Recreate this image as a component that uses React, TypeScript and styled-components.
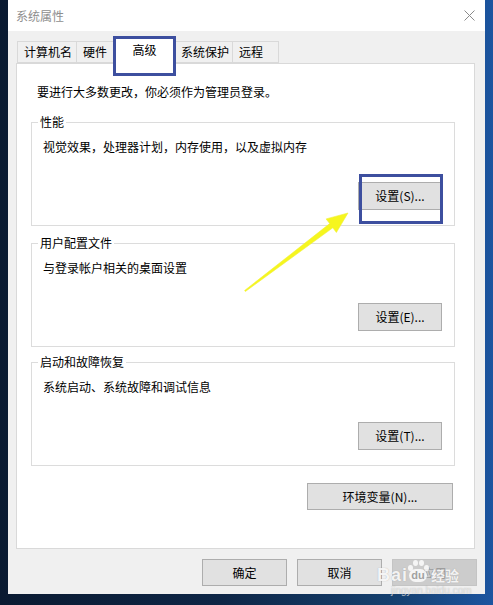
import React from "react";
import styled, { createGlobalStyle } from "styled-components";

const Global = createGlobalStyle`
  html, body { margin: 0; padding: 0; }
  body {
    width: 493px;
    height: 605px;
    overflow: hidden;
    background: linear-gradient(90deg, #0a1a31 0%, #0e2646 45%, #15406f 80%, #1c55a0 100%);
    font-family: "Noto Sans CJK SC", "Noto Sans", sans-serif;
    font-size: 12px;
    color: #000;
  }
`;

const Desktop = styled.div`
  position: relative;
  width: 493px;
  height: 605px;
  box-sizing: border-box;
  padding-left: 8px;
  display: flex;
  align-items: flex-start;
`;

const Window = styled.div`
  width: 477px;
  height: 594px;
  background: #f0f0f0;
  display: flex;
  flex-direction: column;
`;

const TitleBar = styled.div`
  height: 31px;
  flex: none;
  background: #fff;
  display: flex;
  align-items: center;
  justify-content: space-between;
  padding: 0 10px 0 8px;
`;

const Title = styled.span`
  color: #8e8e8e;
  font-size: 12px;
  line-height: 16px;
`;

const CloseGlyph = styled.svg`
  width: 11px;
  height: 11px;
  display: block;
`;

const Body = styled.div`
  flex: none;
  display: flex;
  flex-direction: column;
  padding: 0 10px 0 8px;
`;

const TabStrip = styled.div`
  display: flex;
  align-items: flex-end;
  height: 26px;
  margin-top: 6px;
  padding-left: 1px;
`;

const Tab = styled.div<{ $w: number; $active?: boolean }>`
  position: relative;
  box-sizing: border-box;
  width: ${(p) => p.$w}px;
  height: ${(p) => (p.$active ? 27 : 22)}px;
  margin-left: -1px;
  margin-bottom: ${(p) => (p.$active ? -1 : 0)}px;
  border: 1px solid #d9d9d9;
  border-bottom: ${(p) => (p.$active ? "none" : "1px solid #d9d9d9")};
  background: ${(p) => (p.$active ? "#fff" : "#f0f0f0")};
  z-index: ${(p) => (p.$active ? 2 : 1)};
  display: flex;
  align-items: center;
  justify-content: ${(p) => (p.$active ? "center" : "flex-start")};
  padding: ${(p) => (p.$active ? "0 0 3px 0" : "0 0 0 6px")};
  line-height: 16px;
  white-space: nowrap;
  &:first-child { margin-left: 0; }
`;

const Highlight = styled.div<{ $l: number; $t: number; $w: number; $h: number }>`
  position: absolute;
  left: ${(p) => p.$l}px;
  top: ${(p) => p.$t}px;
  width: ${(p) => p.$w}px;
  height: ${(p) => p.$h}px;
  box-sizing: border-box;
  border: 3px solid #3d4f9f;
  pointer-events: none;
  z-index: 5;
`;

const Panel = styled.div`
  position: relative;
  z-index: 1;
  box-sizing: border-box;
  height: 486px;
  background: #fff;
  border: 1px solid #d9d9d9;
  padding: 20px 19px 0 14px;
  display: flex;
  flex-direction: column;
`;

const Notice = styled.p`
  margin: 0 0 0 6px;
  line-height: 16px;
`;

const Group = styled.fieldset<{ $gap: number }>`
  margin: ${(p) => p.$gap}px 0 0 0;
  width: 424px;
  box-sizing: border-box;
  min-width: 0;
  border: 1px solid #dcdcdc;
  padding: 0 6px 15px 6px;
  display: flex;
  flex-direction: column;
`;

const Legend = styled.legend`
  padding: 0 2px;
  line-height: 16px;
  font-size: 12px;
`;

const Description = styled.div`
  margin: 9px 0 0 5px;
  line-height: 16px;
`;

const ButtonRow = styled.div`
  display: flex;
  justify-content: flex-end;
  margin-top: 27px;
  padding-right: 6px;
`;

const Button = styled.button<{ $w: number; $h?: number; $disabled?: boolean }>`
  position: relative;
  flex: none;
  box-sizing: border-box;
  width: ${(p) => p.$w}px;
  height: ${(p) => p.$h ?? 27}px;
  padding: 0;
  border: 1px solid ${(p) => (p.$disabled ? "#c4c4c4" : "#adadad")};
  background: ${(p) => (p.$disabled ? "#cccccc" : "#e1e1e1")};
  color: ${(p) => (p.$disabled ? "#9d9d9d" : "#000")};
  font-family: "Noto Sans CJK SC", "Noto Sans", sans-serif;
  font-size: 12px;
  line-height: 16px;
  display: flex;
  align-items: center;
  justify-content: center;
`;

const EnvRow = styled.div`
  display: flex;
  justify-content: flex-end;
  margin-top: 17px;
  padding-right: 2px;
`;

const Footer = styled.div`
  flex: 1;
  display: flex;
  justify-content: flex-end;
  align-items: flex-start;
  gap: 10px;
  padding: 10px 8px 0 0;
`;

const Overlay = styled.svg`
  position: absolute;
  left: 0;
  top: 0;
  width: 493px;
  height: 605px;
  pointer-events: none;
  z-index: 10;
`;

const Watermark = styled.div`
  position: absolute;
  left: 377px;
  top: 555px;
  width: 100px;
  height: 46px;
  pointer-events: none;
  z-index: 11;
  display: flex;
  flex-direction: column;
  align-items: flex-start;
  color: rgba(255, 255, 255, 0.88);
  text-shadow: 0 0 1px rgba(120, 120, 120, 0.55);
`;

const MarkLine = styled.div`
  display: flex;
  align-items: flex-end;
  height: 30px;
`;

const MarkWord = styled.span`
  font-family: "Liberation Sans", Arial, sans-serif;
  font-weight: bold;
  font-size: 18px;
  line-height: 20px;
  letter-spacing: 1px;
`;

const Paw = styled.span`
  position: relative;
  display: inline-flex;
  align-items: flex-end;
  justify-content: center;
  width: 20px;
  height: 28px;
  margin: 0 3px 0 0;
`;

const PawPad = styled.span`
  display: flex;
  align-items: center;
  justify-content: center;
  width: 18px;
  height: 13px;
  border-radius: 7px;
  background: rgba(255, 255, 255, 0.8);
  color: rgba(150, 150, 150, 0.9);
  font-family: "Liberation Sans", Arial, sans-serif;
  font-weight: bold;
  font-size: 11px;
  line-height: 13px;
  text-shadow: none;
  margin-bottom: 3px;
`;

const Toe = styled.span<{ $x: number; $y: number }>`
  position: absolute;
  left: ${(p) => p.$x}px;
  top: ${(p) => p.$y}px;
  width: 5px;
  height: 6px;
  border-radius: 50%;
  background: rgba(255, 255, 255, 0.8);
`;

const MarkCn = styled.span`
  font-size: 14px;
  line-height: 20px;
  font-weight: bold;
`;

const MarkUrl = styled.span`
  font-family: "Liberation Sans", Arial, sans-serif;
  font-size: 10px;
  line-height: 12px;
  margin-left: 14px;
  color: rgba(255, 255, 255, 0.6);
`;

const tabs = [
  { label: "计算机名", w: 60 },
  { label: "硬件", w: 39 },
  { label: "高级", w: 61, active: true },
  { label: "系统保护", w: 59 },
  { label: "远程", w: 47 },
];

const groups = [
  { title: "性能", text: "视觉效果，处理器计划，内存使用，以及虚拟内存", button: "设置(S)...", gap: 14, marked: true },
  { title: "用户配置文件", text: "与登录帐户相关的桌面设置", button: "设置(E)...", gap: 9 },
  { title: "启动和故障恢复", text: "系统启动、系统故障和调试信息", button: "设置(T)...", gap: 7 },
];

// arrow pointing from lower-left towards the settings button
const tail = { x: 245, y: 291 };
const tip = { x: 348, y: 213 };
const arrowPoints = (() => {
  const dx = tip.x - tail.x;
  const dy = tip.y - tail.y;
  const len = Math.hypot(dx, dy);
  const ux = dx / len;
  const uy = dy / len;
  const px = -uy;
  const py = ux;
  const headLen = 21;
  const headHalf = 8.5;
  const bx = tip.x - ux * headLen;
  const by = tip.y - uy * headLen;
  const pts = [
    [tail.x + px * 0.6, tail.y + py * 0.6],
    [bx + px * 2.6, by + py * 2.6],
    [bx + px * headHalf, by + py * headHalf],
    [tip.x, tip.y],
    [bx - px * headHalf, by - py * headHalf],
    [bx - px * 2.6, by - py * 2.6],
    [tail.x - px * 0.6, tail.y - py * 0.6],
  ];
  return pts.map(([x, y]) => `${x.toFixed(1)},${y.toFixed(1)}`).join(" ");
})();

export default function App() {
  return (
    <>
      <Global />
      <Desktop>
        <Window>
          <TitleBar>
            <Title>系统属性</Title>
            <CloseGlyph viewBox="0 0 11 11">
              <path d="M0.5 0.5 L10.5 10.5 M10.5 0.5 L0.5 10.5" stroke="#8a8a8a" strokeWidth="1" fill="none" />
            </CloseGlyph>
          </TitleBar>
          <Body>
            <TabStrip>
              {tabs.map((t) => (
                <Tab key={t.label} $w={t.w} $active={t.active}>
                  {t.label}
                  {t.active && <Highlight $l={-2} $t={-2} $w={63} $h={40} />}
                </Tab>
              ))}
            </TabStrip>
            <Panel>
              <Notice>要进行大多数更改，你必须作为管理员登录。</Notice>
              {groups.map((g) => (
                <Group key={g.title} $gap={g.gap}>
                  <Legend>{g.title}</Legend>
                  <Description>{g.text}</Description>
                  <ButtonRow>
                    <Button $w={84} $h={28}>
                      {g.button}
                      {g.marked && <Highlight $l={0} $t={-9} $w={84} $h={50} />}
                    </Button>
                  </ButtonRow>
                </Group>
              ))}
              <EnvRow>
                <Button $w={146}>环境变量(N)...</Button>
              </EnvRow>
            </Panel>
          </Body>
          <Footer>
            <Button $w={85}>确定</Button>
            <Button $w={85}>取消</Button>
            <Button $w={85} $disabled>应用</Button>
          </Footer>
        </Window>
        <Overlay viewBox="0 0 493 605">
          <polygon points={arrowPoints} fill="#f6f61e" stroke="#f0f03a" strokeWidth="0.6" strokeLinejoin="round" />
        </Overlay>
        <Watermark>
          <MarkLine>
            <MarkWord>Bai</MarkWord>
            <Paw>
              <Toe $x={0} $y={8} />
              <Toe $x={5} $y={3} />
              <Toe $x={11} $y={3} />
              <Toe $x={16} $y={8} />
              <PawPad>du</PawPad>
            </Paw>
            <MarkCn>经验</MarkCn>
          </MarkLine>
          <MarkUrl>jingyan.baidu.com</MarkUrl>
        </Watermark>
      </Desktop>
    </>
  );
}
